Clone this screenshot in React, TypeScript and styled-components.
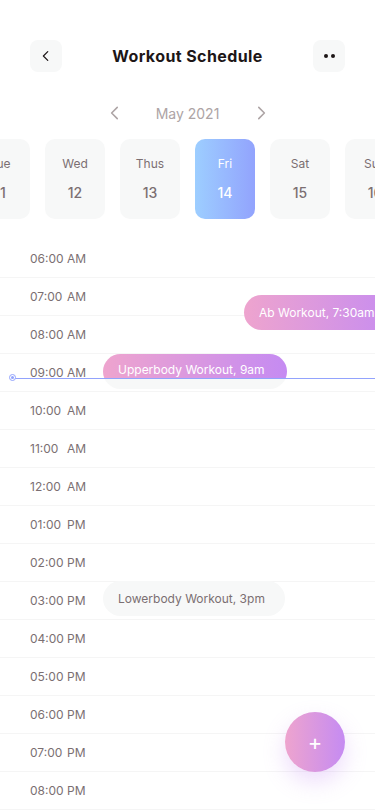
import styled, { createGlobalStyle } from 'styled-components';

type Day = { name: string; date: number; active?: boolean };
type Slot = { time: string; half: string };
type Event = { title: string; top: number; left: number; width: number; kind: 'pink' | 'grey' | 'split' };

const days: Day[] = [
    { name: 'Tue', date: 11 },
    { name: 'Wed', date: 12 },
    { name: 'Thus', date: 13 },
    { name: 'Fri', date: 14, active: true },
    { name: 'Sat', date: 15 },
    { name: 'Sun', date: 16 },
];

const slots: Slot[] = [
    { time: '06:00', half: 'AM' },
    { time: '07:00', half: 'AM' },
    { time: '08:00', half: 'AM' },
    { time: '09:00', half: 'AM' },
    { time: '10:00', half: 'AM' },
    { time: '11:00', half: 'AM' },
    { time: '12:00', half: 'AM' },
    { time: '01:00', half: 'PM' },
    { time: '02:00', half: 'PM' },
    { time: '03:00', half: 'PM' },
    { time: '04:00', half: 'PM' },
    { time: '05:00', half: 'PM' },
    { time: '06:00', half: 'PM' },
    { time: '07:00', half: 'PM' },
    { time: '08:00', half: 'PM' },
];

// top offsets are relative to the start of the timetable
const events: Event[] = [
    { title: 'Ab Workout, 7:30am', top: 55, left: 244, width: 160, kind: 'pink' },
    { title: 'Upperbody Workout, 9am', top: 114, left: 103, width: 184, kind: 'split' },
    { title: 'Lowerbody Workout, 3pm', top: 341, left: 103, width: 182, kind: 'grey' },
];

const GlobalStyle = createGlobalStyle`
    html, body {
        margin: 0;
        padding: 0;
        background: #ffffff;
    }
    body {
        font-family: Inter, 'Noto Sans', sans-serif;
        overflow: hidden;
    }
`;

const Chevron = ({ dir, size = 16 }: { dir: 'left' | 'right'; size?: number }) => (
    <svg width={size} height={size} viewBox="0 0 16 16" fill="none">
        <path
            d={dir === 'left' ? 'M10 3L5 8l5 5' : 'M6 3l5 5-5 5'}
            stroke="currentColor"
            strokeWidth="1.4"
            strokeLinecap="round"
            strokeLinejoin="round"
        />
    </svg>
);

const App = () => {
    return (
        <Screen>
            <GlobalStyle />
            <Header>
                <IconButton>
                    <Chevron dir="left" size={14} />
                </IconButton>
                <Title>Workout Schedule</Title>
                <IconButton>
                    <Dots>
                        <span />
                        <span />
                    </Dots>
                </IconButton>
            </Header>

            <MonthRow>
                <MonthArrow>
                    <Chevron dir="left" size={18} />
                </MonthArrow>
                <MonthLabel>May 2021</MonthLabel>
                <MonthArrow>
                    <Chevron dir="right" size={18} />
                </MonthArrow>
            </MonthRow>

            <DayStrip>
                {days.map((d) => (
                    <DayCard key={d.name} $active={d.active}>
                        <DayName>{d.name}</DayName>
                        <DayNumber>{d.date}</DayNumber>
                    </DayCard>
                ))}
            </DayStrip>

            <Timetable>
                {slots.map((s, i) => (
                    <SlotRow key={i}>
                        <SlotTime>{s.time}</SlotTime>
                        <SlotHalf>{s.half}</SlotHalf>
                    </SlotRow>
                ))}
                <NowLine>
                    <NowDot />
                </NowLine>
                {events.map((e) => (
                    <EventPill
                        key={e.title}
                        $kind={e.kind}
                        style={{ top: e.top, left: e.left, width: e.width }}
                    >
                        {e.title}
                    </EventPill>
                ))}
            </Timetable>

            <Fab>+</Fab>
        </Screen>
    );
};

const Screen = styled.div`
    position: relative;
    width: 375px;
    height: 812px;
    overflow: hidden;
    background: #ffffff;
    padding-top: 40px;
    box-sizing: border-box;
`;

const Header = styled.div`
    display: flex;
    justify-content: space-between;
    align-items: center;
    padding: 0 30px;
    height: 32px;
`;

const IconButton = styled.div`
    width: 32px;
    height: 32px;
    border-radius: 8px;
    background: #f7f8f8;
    display: flex;
    align-items: center;
    justify-content: center;
    color: #1d1617;
`;

const Dots = styled.div`
    display: flex;
    gap: 3px;
    > span {
        width: 4px;
        height: 4px;
        border-radius: 50%;
        background: #1d1617;
    }
`;

const Title = styled.h1`
    margin: 0;
    font-size: 16px;
    font-weight: 700;
    color: #1d1617;
    letter-spacing: 0.4px;
`;

const MonthRow = styled.div`
    display: flex;
    justify-content: center;
    align-items: center;
    gap: 32px;
    margin-top: 31px;
    height: 20px;
    color: #ada4a5;
`;

const MonthArrow = styled.div`
    display: flex;
    align-items: center;
    color: #ada4a5;
`;

const MonthLabel = styled.span`
    font-size: 14px;
    width: 64px;
    text-align: center;
    color: #ada4a5;
`;

const DayStrip = styled.div`
    display: flex;
    gap: 15px;
    margin-top: 16px;
    margin-left: -30px;
`;

const DayCard = styled.div<{ $active?: boolean }>`
    flex: 0 0 60px;
    height: 80px;
    border-radius: 10px;
    display: flex;
    flex-direction: column;
    align-items: center;
    justify-content: center;
    gap: 14px;
    background: ${(p) => (p.$active ? 'linear-gradient(90deg, #9dceff, #92a3fd)' : '#f7f8f8')};
    color: ${(p) => (p.$active ? '#ffffff' : '#7b6f72')};
`;

const DayName = styled.span`
    font-size: 12px;
    line-height: 14px;
`;

const DayNumber = styled.span`
    font-size: 14px;
    font-weight: 500;
    line-height: 16px;
`;

const Timetable = styled.div`
    position: relative;
    margin-top: 21px;
`;

const SlotRow = styled.div`
    height: 37px;
    border-bottom: 1px solid #f5f5f5;
    display: flex;
    align-items: center;
    padding-left: 30px;
    font-size: 12px;
    color: #7b6f72;
`;

const SlotTime = styled.span`
    width: 37px;
`;

const SlotHalf = styled.span``;

const NowLine = styled.div`
    position: absolute;
    left: 13px;
    right: 0;
    top: 138px;
    height: 1px;
    background: #92a3fd;
    z-index: 2;
`;

const NowDot = styled.div`
    position: absolute;
    left: -4px;
    top: -4px;
    width: 5px;
    height: 5px;
    border-radius: 50%;
    border: 1.5px solid #92a3fd;
    background: #ffffff;
    &::after {
        content: '';
        position: absolute;
        left: 1px;
        top: 1px;
        width: 3px;
        height: 3px;
        border-radius: 50%;
        background: #92a3fd;
    }
`;

const EventPill = styled.div<{ $kind: 'pink' | 'grey' | 'split' }>`
    position: absolute;
    height: 35px;
    border-radius: 18px;
    display: flex;
    align-items: ${(p) => (p.$kind === 'split' ? 'flex-start' : 'center')};
    padding: ${(p) => (p.$kind === 'split' ? '8px 15px 0' : '0 15px')};
    box-sizing: border-box;
    font-size: 12px;
    white-space: nowrap;
    overflow: hidden;
    z-index: 1;
    color: ${(p) => (p.$kind === 'grey' ? '#7b6f72' : '#ffffff')};
    background: ${(p) =>
        p.$kind === 'grey'
            ? '#f7f8f8'
            : p.$kind === 'split'
              ? 'linear-gradient(#f7f8f8, #f7f8f8) bottom / 100% 10px no-repeat, linear-gradient(90deg, #eea4ce, #c58bf2)'
              : 'linear-gradient(90deg, #eea4ce, #c58bf2)'};
`;

const Fab = styled.div`
    position: absolute;
    left: 285px;
    top: 712px;
    width: 60px;
    height: 60px;
    border-radius: 50%;
    background: linear-gradient(90deg, #eea4ce, #c58bf2);
    box-shadow: 0 10px 22px rgba(197, 139, 242, 0.3);
    color: #ffffff;
    font-size: 22px;
    font-weight: 400;
    display: flex;
    align-items: center;
    justify-content: center;
    z-index: 3;
`;

export default App;
